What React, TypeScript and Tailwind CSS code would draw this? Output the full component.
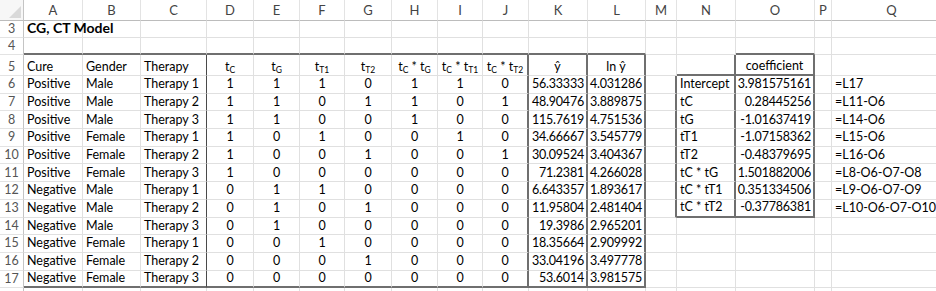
import type { ReactNode } from "react";

// column widths: row header, A..Q
const W = [
  "w-[24px]", "w-[59px]", "w-[58px]", "w-[66px]", "w-[47px]", "w-[46px]", "w-[45px]", "w-[47px]", "w-[46px]",
  "w-[45px]", "w-[46px]", "w-[59px]", "w-[58px]", "w-[31px]", "w-[59px]", "w-[79px]", "w-[17px]", "w-[120px]",
];
const LETTERS = ["", "A", "B", "C", "D", "E", "F", "G", "H", "I", "J", "K", "L", "M", "N", "O", "P", "Q"];

const RIGHT = {
  g: "border-r border-r-[#e0e0e0]",
  d: "border-r border-r-[#4a4a4a]",
  h: "border-r-2 border-r-[#6f6f6f]",
};
const BOTTOM = {
  g: "border-b border-b-[#e0e0e0]",
  h: "border-b-2 border-b-[#6f6f6f]",
};

function edgeR(r: number, c: number): keyof typeof RIGHT {
  if (r >= 5 && r <= 17 && c === 3) return "d";
  if (r >= 5 && r <= 17 && c >= 10 && c <= 12) return "h";
  if (r >= 6 && r <= 13 && (c === 13 || c === 14)) return "h";
  if (r >= 5 && r <= 13 && c === 15) return "h";
  if (r === 5 && c === 14) return "h";
  return "g";
}

function edgeB(r: number, c: number): keyof typeof BOTTOM {
  if ((r === 4 || r === 17) && c >= 1 && c <= 12) return "h";
  if (r === 4 && c === 15) return "h";
  if ((r === 5 || r === 13) && (c === 14 || c === 15)) return "h";
  return "g";
}

function T({ s }: { s: string }) {
  return (
    <>
      t<sub className="text-[8.5px] bottom-[-0.3em]">{s}</sub>
    </>
  );
}

type Align = "l" | "c" | "r";
type Cell = { v?: ReactNode; a?: Align; b?: boolean; n?: boolean };

const DATA: [string, string, string, number[], string, string, string, string, string][] = [
  ["Positive", "Male", "Therapy 1", [1, 1, 1, 0, 1, 1, 0], "56.33333", "4.031286", "Intercept", "3.981575161", "=L17"],
  ["Positive", "Male", "Therapy 2", [1, 1, 0, 1, 1, 0, 1], "48.90476", "3.889875", "tC", "0.28445256", "=L11-O6"],
  ["Positive", "Male", "Therapy 3", [1, 1, 0, 0, 1, 0, 0], "115.7619", "4.751536", "tG", "-1.01637419", "=L14-O6"],
  ["Positive", "Female", "Therapy 1", [1, 0, 1, 0, 0, 1, 0], "34.66667", "3.545779", "tT1", "-1.07158362", "=L15-O6"],
  ["Positive", "Female", "Therapy 2", [1, 0, 0, 1, 0, 0, 1], "30.09524", "3.404367", "tT2", "-0.48379695", "=L16-O6"],
  ["Positive", "Female", "Therapy 3", [1, 0, 0, 0, 0, 0, 0], "71.2381", "4.266028", "tC * tG", "1.501882006", "=L8-O6-O7-O8"],
  ["Negative", "Male", "Therapy 1", [0, 1, 1, 0, 0, 0, 0], "6.643357", "1.893617", "tC * tT1", "0.351334506", "=L9-O6-O7-O9"],
  ["Negative", "Male", "Therapy 2", [0, 1, 0, 1, 0, 0, 0], "11.95804", "2.481404", "tC * tT2", "-0.37786381", "=L10-O6-O7-O10"],
  ["Negative", "Male", "Therapy 3", [0, 1, 0, 0, 0, 0, 0], "19.3986", "2.965201", "", "", ""],
  ["Negative", "Female", "Therapy 1", [0, 0, 1, 0, 0, 0, 0], "18.35664", "2.909992", "", "", ""],
  ["Negative", "Female", "Therapy 2", [0, 0, 0, 1, 0, 0, 0], "33.04196", "3.497778", "", "", ""],
  ["Negative", "Female", "Therapy 3", [0, 0, 0, 0, 0, 0, 0], "53.6014", "3.981575", "", "", ""],
];

function Row({ r, h, cells, label = true }: { r: number; h: string; cells: Cell[]; label?: boolean }) {
  return (
    <div className={`flex ${h}`}>
      <div className={`${W[0]} shrink-0 flex items-end justify-center pb-[2px] border-r border-r-[#c4c4c4] border-b border-b-[#e3e3e3] text-[#555]`}>
        {label && <span>{r}</span>}
      </div>
      {LETTERS.slice(1).map((_, i) => {
        const c = i + 1;
        const cell = cells[i] ?? {};
        const a = cell.a ?? "l";
        return (
          <div
            key={c}
            className={`${W[c]} shrink-0 flex items-end pb-[2px] whitespace-nowrap ${RIGHT[edgeR(r, c)]} ${BOTTOM[edgeB(r, c)]} ${
              a === "c" ? "justify-center" : a === "r" ? "justify-end pr-[2px]" : "justify-start pl-[3px]"
            } ${cell.b ? "font-bold text-[14px]" : ""} ${cell.n ? "tracking-[-0.2px]" : ""}`}
          >
            <span>{cell.v}</span>
          </div>
        );
      })}
    </div>
  );
}

export default function App() {
  const header5: Cell[] = [
    { v: "Cure" },
    { v: "Gender" },
    { v: "Therapy" },
    { v: <T s="C" />, a: "c" },
    { v: <T s="G" />, a: "c" },
    { v: <T s="T1" />, a: "c" },
    { v: <T s="T2" />, a: "c" },
    { v: <><T s="C" /> * <T s="G" /></>, a: "c" },
    { v: <><T s="C" /> * <T s="T1" /></>, a: "c" },
    { v: <><T s="C" /> * <T s="T2" /></>, a: "c" },
    { v: "ŷ", a: "c" },
    { v: "ln ŷ", a: "c" },
    {},
    {},
    { v: "coefficient", a: "c" },
  ];

  return (
    <div className="w-[936px] h-[291px] overflow-hidden bg-white text-black text-[12.5px] leading-none font-['Lato',sans-serif]">
      {/* column letters */}
      <div className="flex h-[21px]">
        <div className={`${W[0]} shrink-0 relative border-r border-r-[#c4c4c4] border-b border-b-[#bcbcbc] bg-[#f7f7f7]`}>
          <svg className="absolute right-[2px] bottom-[2px]" width="12" height="12" viewBox="0 0 12 12">
            <polygon points="12,0 12,12 0,12" fill="#d9d9d9" />
          </svg>
        </div>
        {LETTERS.slice(1).map((l, i) => (
          <div
            key={l}
            className={`${W[i + 1]} shrink-0 flex items-center justify-center border-r border-r-[#e3e3e3] border-b border-b-[#bcbcbc] text-[#444] text-[13px]`}
          >
            {l}
          </div>
        ))}
      </div>

      <Row r={3} h="h-[17px]" cells={[{ v: "CG, CT Model", b: true }]} />
      <Row r={4} h="h-[17px]" cells={[]} />
      <Row r={5} h="h-[21px]" cells={header5} />
      {DATA.map((d, k) => {
        const cells: Cell[] = [
          { v: d[0] },
          { v: d[1] },
          { v: d[2] },
          ...d[3].map((n): Cell => ({ v: String(n), a: "c" })),
          { v: d[4], a: "r", n: true },
          { v: d[5], a: "r", n: true },
          {},
          { v: d[6] },
          { v: d[7], a: "r", n: true },
          {},
          { v: d[8] },
        ];
        return <Row key={k} r={k + 6} h="h-[17.7px]" cells={cells} />;
      })}
      <Row r={18} h="h-[17.7px]" cells={[]} label={false} />
    </div>
  );
}
